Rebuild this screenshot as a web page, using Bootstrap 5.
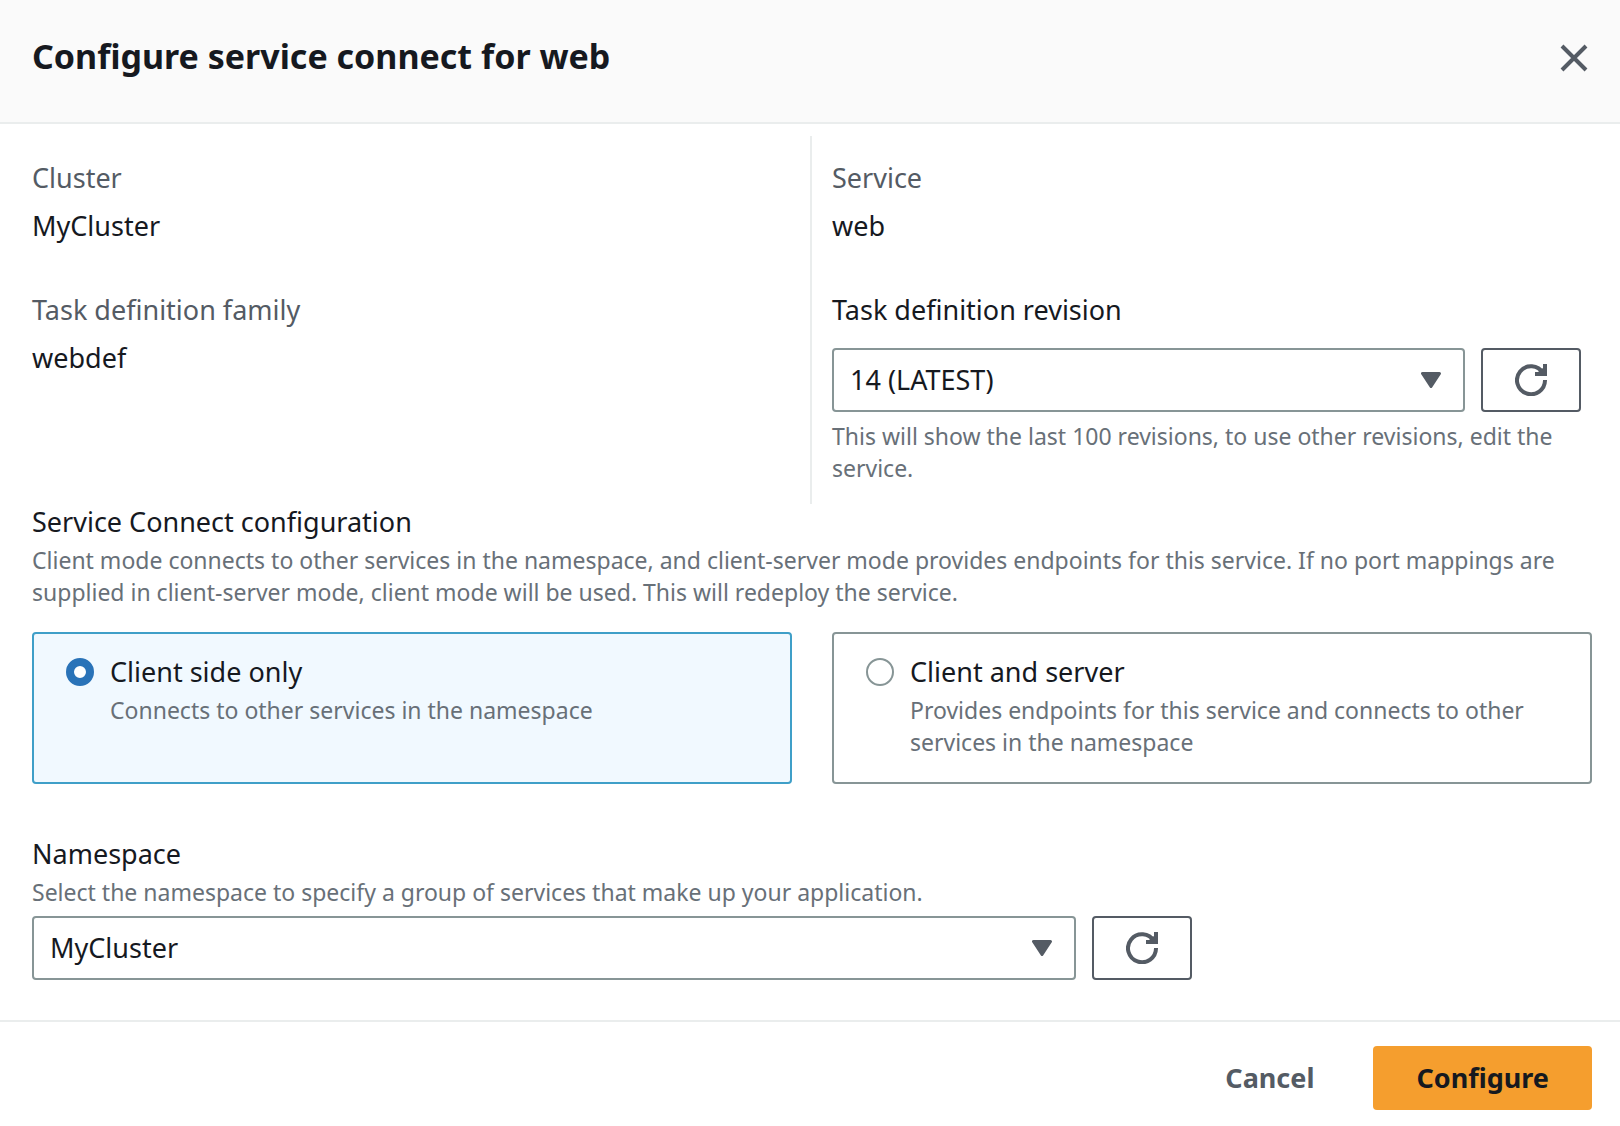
<!DOCTYPE html>
<html lang="en">
<head>
<meta charset="utf-8">
<meta name="viewport" content="width=device-width, initial-scale=1">
<title>Configure service connect for web</title>
<link href="https://cdn.jsdelivr.net/npm/bootstrap@5.3.0/dist/css/bootstrap.min.css" rel="stylesheet">
<style>
  :root { --ink: #16191f; --slate: #545b64; --hint: #687078; --edge: #879596; --rule: #eaeded; }
  body { font-family: "Noto Sans", "Open Sans", sans-serif; font-size: 27px; line-height: 44px; color: var(--ink); background: #fff; }
  .dialog-head { background: #fafafa; border-bottom: 2px solid var(--rule); padding: 26px 28px 36px 32px; }
  .dialog-title { font-size: 34px; line-height: 60px; font-weight: 700; }
  .close-btn { width: 36px; height: 36px; color: var(--slate); margin-top: 14px; }
  .dialog-body { padding: 12px 28px 40px 32px; }
  .detail-col { padding: 20px 11px 20px 0; }
  .detail-first { border-right: 2px solid var(--rule); }
  .detail-second { padding-left: 20px; }
  .detail-list dt { font-weight: 400; color: var(--slate); margin-bottom: 4px; }
  .detail-list dd { margin-bottom: 40px; }
  .mode-group { margin-top: -4px; }
  .mode-title { font-size: 27px; line-height: 44px; }
  .hint-text { font-size: 23px; line-height: 32px; color: var(--hint); }
  .form-select { height: 64px; padding: 0 64px 0 16px; font-size: 27px; line-height: 44px; color: var(--ink); border: 2px solid var(--edge); border-radius: 4px;
    background-image: url("data:image/svg+xml,%3Csvg xmlns='http://www.w3.org/2000/svg' viewBox='0 0 20 16'%3E%3Cpath d='M1.5 1.5h17L10 14.5z' fill='%23545b64' stroke='%23545b64' stroke-width='3' stroke-linejoin='round'/%3E%3C/svg%3E");
    background-size: 20px 16px; background-position: right 22px center; }
  .refresh-btn { width: 100px; height: 64px; flex: none; padding: 0; border: 2px solid var(--slate); border-radius: 4px; color: var(--slate); }
  .tile { flex: 1 1 0; border: 2px solid var(--edge); border-radius: 4px; padding: 16px 32px 24px; cursor: pointer; }
  .tile:has(input:checked) { background: #f1f9ff; border-color: #3f9fc8; }
  .tile .form-check-input { width: 28px; height: 28px; margin: 8px 16px 0 0; border: 2px solid var(--edge); float: none; flex: none; background-color: #fff; }
  .tile .form-check-input:checked { border: 8px solid #2a73b8; background-image: none; }
  .tile-row { gap: 40px; margin: 24px 0 48px; }
  .namespace-col { padding-right: 10px; }
  .dialog-foot { border-top: 2px solid var(--rule); padding: 24px 28px 16px; gap: 16px; }
  .foot-btn { height: 64px; padding: 0 43px; font-size: 27px; line-height: 44px; font-weight: 700; border: 0; border-radius: 4px; }
  .cancel-btn, .cancel-btn:hover { color: var(--slate); }
  .configure-btn, .configure-btn:hover { background: #f59e2e; color: var(--ink); }
</style>
</head>
<body>
<form>
  <header class="dialog-head d-flex justify-content-between align-items-start">
    <h1 class="dialog-title mb-0">Configure service connect for web</h1>
    <button type="button" class="close-btn btn p-0 border-0 d-flex" aria-label="Close">
      <svg width="36" height="36" viewBox="0 0 36 36" fill="none" stroke="currentColor" stroke-width="4"><path d="M6 6l24 24M30 6L6 30"/></svg>
    </button>
  </header>

  <main class="dialog-body">
    <div class="row g-0">
      <div class="col-6 detail-col detail-first">
        <dl class="detail-list mb-0">
          <dt>Cluster</dt><dd>MyCluster</dd>
          <dt>Task definition family</dt><dd class="mb-0">webdef</dd>
        </dl>
      </div>
      <div class="col-6 detail-col detail-second">
        <dl class="detail-list mb-0"><dt>Service</dt><dd>web</dd></dl>
        <label class="d-block mb-3" for="revision">Task definition revision</label>
        <div class="d-flex gap-3">
          <select class="form-select" id="revision" aria-describedby="revision-hint"><option>14 (LATEST)</option></select>
          <button type="button" class="refresh-btn btn d-flex align-items-center justify-content-center" aria-label="Refresh revisions">
            <svg width="32" height="32" viewBox="0 0 32 32" fill="none" stroke="currentColor" stroke-width="4"><path d="M30 16A14 14 0 1 1 28 9"/><path d="M30 0v10H20"/><path d="M23 8l5-4v5z" fill="currentColor" stroke="none"/></svg>
          </button>
        </div>
        <p class="hint-text mb-0 mt-2" id="revision-hint">This will show the last 100 revisions, to use other revisions, edit the service.</p>
      </div>
    </div>

    <fieldset class="mode-group">
      <legend class="mode-title mb-0">Service Connect configuration</legend>
      <p class="hint-text mb-0">Client mode connects to other services in the namespace, and client-server mode provides endpoints for this service. If no port mappings are supplied in client-server mode, client mode will be used. This will redeploy the service.</p>
      <div class="tile-row d-flex">
        <label class="tile d-flex" for="client-only">
          <input class="form-check-input" type="radio" name="mode" id="client-only" checked>
          <span><span class="d-block">Client side only</span><span class="hint-text d-block">Connects to other services in the namespace</span></span>
        </label>
        <label class="tile d-flex" for="client-server">
          <input class="form-check-input" type="radio" name="mode" id="client-server">
          <span><span class="d-block">Client and server</span><span class="hint-text d-block">Provides endpoints for this service and connects to other services in the namespace</span></span>
        </label>
      </div>
    </fieldset>

    <label class="d-block" for="namespace">Namespace</label>
    <p class="hint-text mb-2" id="namespace-hint">Select the namespace to specify a group of services that make up your application.</p>
    <div class="row g-0">
      <div class="col-9 namespace-col d-flex gap-3">
        <select class="form-select" id="namespace" aria-describedby="namespace-hint"><option>MyCluster</option></select>
        <button type="button" class="refresh-btn btn d-flex align-items-center justify-content-center" aria-label="Refresh namespaces">
          <svg width="32" height="32" viewBox="0 0 32 32" fill="none" stroke="currentColor" stroke-width="4"><path d="M30 16A14 14 0 1 1 28 9"/><path d="M30 0v10H20"/><path d="M23 8l5-4v5z" fill="currentColor" stroke="none"/></svg>
        </button>
      </div>
    </div>
  </main>

  <footer class="dialog-foot d-flex justify-content-end">
    <button type="button" class="foot-btn cancel-btn btn">Cancel</button>
    <button type="submit" class="foot-btn configure-btn btn">Configure</button>
  </footer>
</form>
<script src="https://cdn.jsdelivr.net/npm/bootstrap@5.3.0/dist/js/bootstrap.bundle.min.js"></script>
</body>
</html>
